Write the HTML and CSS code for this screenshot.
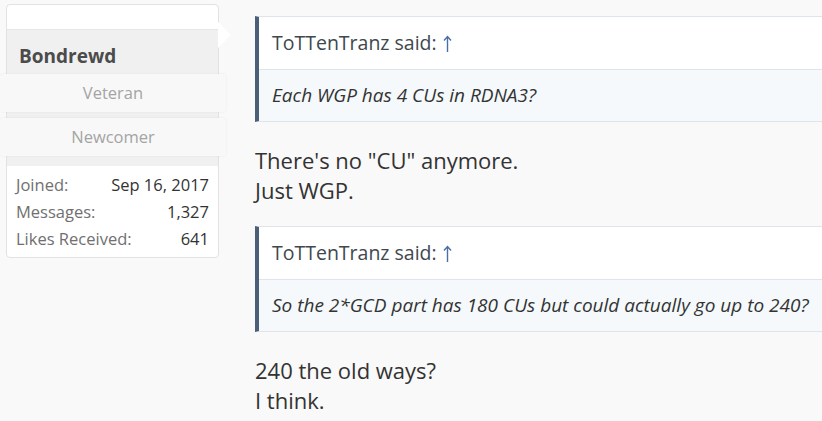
FILE: index.html
```html
<!DOCTYPE html>
<html>
<head>
<meta charset="utf-8">
<link rel="stylesheet" href="styles.css">
</head>
<body>
<div class="post">
  <aside class="user">
    <div class="card">
      <div class="avatar-strip"></div>
      <div class="ident">
        <div class="name">Bondrewd</div>
        <div class="banner">Veteran</div>
        <div class="banner">Newcomer</div>
      </div>
      <dl class="stats">
        <div class="row"><dt>Joined:</dt><dd>Sep 16, 2017</dd></div>
        <div class="row"><dt>Messages:</dt><dd>1,327</dd></div>
        <div class="row"><dt>Likes Received:</dt><dd>641</dd></div>
      </dl>
      <span class="arrow"></span>
    </div>
  </aside>
  <main class="content">
    <blockquote class="quote">
      <div class="q-head">ToTTenTranz said: <svg class="up" width="9" height="18" viewBox="0 0 9 18"><path d="M4.5 1.5V17M1 5.5L4.5 1.5L8 5.5" fill="none" stroke="#4a6fa8" stroke-width="1.4"/></svg></div>
      <div class="q-body">Each WGP has 4 CUs in RDNA3?</div>
    </blockquote>
    <p class="msg">There's no "CU" anymore.<br>Just WGP.</p>
    <blockquote class="quote">
      <div class="q-head">ToTTenTranz said: <svg class="up" width="9" height="18" viewBox="0 0 9 18"><path d="M4.5 1.5V17M1 5.5L4.5 1.5L8 5.5" fill="none" stroke="#4a6fa8" stroke-width="1.4"/></svg></div>
      <div class="q-body">So the 2*GCD part has 180 CUs but could actually go up to 240?</div>
    </blockquote>
    <p class="msg">240 the old ways?<br>I think.</p>
  </main>
</div>
</body>
</html>
```

FILE: styles.css
```css
html, body {
  margin: 0;
  padding: 0;
  background: #f9f9f9;
  overflow: hidden;
  width: 822px;
  height: 421px;
  font-family: "Open Sans", "Liberation Sans", sans-serif;
  color: #333;
}
.post {
  display: flex;
  align-items: flex-start;
}
.user {
  padding: 4px 0 0 6px;
  width: 213px;
  flex: none;
}
.card {
  position: relative;
  background: #fff;
  border: 1px solid #e2e2e2;
  border-radius: 4px;
}
.avatar-strip {
  height: 24px;
  border-bottom: 1px solid #e6e6e6;
}
.ident {
  background: #f0f0f0;
  padding: 12px 0 10px;
}
.name {
  font-weight: 700;
  font-size: 19px;
  color: #4b4b4b;
  padding-left: 12px;
  line-height: 28px;
  margin-bottom: 4px;
}
.banner {
  margin: 0 -8px 6px -7px;
  height: 38px;
  line-height: 38px;
  text-align: center;
  background: #f8f8f8;
  color: #a4a4a4;
  font-size: 16.5px;
  box-shadow: 0 0 2px rgba(0,0,0,0.08);
  border-radius: 2px;
}
.banner:last-child { margin-bottom: 0; }
.stats {
  margin: 0;
  padding: 5px 9px 5px 9px;
  font-size: 16.5px;
}
.row {
  display: flex;
  justify-content: space-between;
  line-height: 27px;
}
.row dt { color: #707070; }
.row dd { margin: 0; color: #333; }
.arrow {
  position: absolute;
  right: -13px;
  top: 17px;
  width: 0;
  height: 0;
  border-top: 13px solid transparent;
  border-bottom: 13px solid transparent;
  border-left: 13px solid #fff;
}
.content {
  padding: 16px 0 0 36px;
  flex: none;
  width: 800px;
}
.quote {
  margin: 0;
  border: 1px solid #dfe4ea;
  border-left: 4px solid #4b6078;
  background: #fff;
}
.q-head {
  padding: 0 13px;
  height: 52px;
  line-height: 52px;
  font-size: 19.5px;
  color: #40484f;
  border-bottom: 1px solid #dfe4ea;
  display: flex;
  align-items: center;
  gap: 6px;
}
.up { display: block; margin-top: 2px; }
.q-body {
  background: #f5f9fc;
  padding: 0 13px;
  height: 51px;
  line-height: 51px;
  font-style: italic;
  font-size: 19px;
  color: #333;
}
.msg {
  margin: 23px 0 21px 0;
  font-size: 22px;
  line-height: 30px;
  color: #333;
}
```
